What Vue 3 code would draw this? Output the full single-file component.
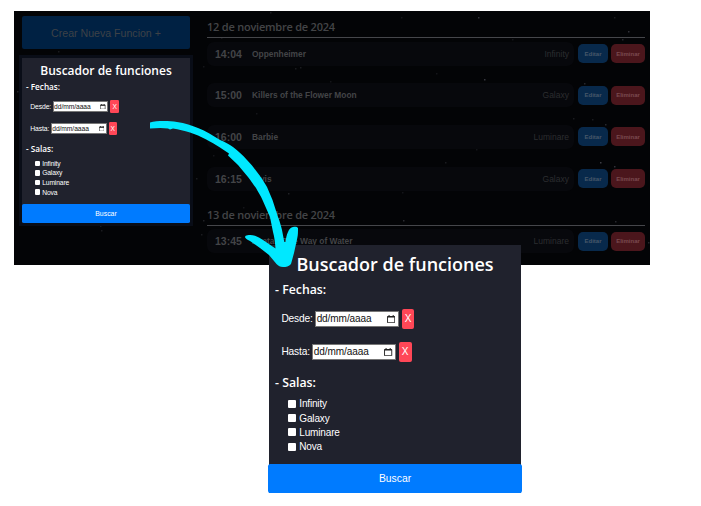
<script setup>
const days = [
  {
    date: '12 de noviembre de 2024',
    shows: [
      { time: '14:04', film: 'Oppenheimer', room: 'Infinity' },
      { time: '15:00', film: 'Killers of the Flower Moon', room: 'Galaxy' },
      { time: '16:00', film: 'Barbie', room: 'Luminare' },
      { time: '16:15', film: 'Elvis', room: 'Galaxy' },
    ],
  },
  {
    date: '13 de noviembre de 2024',
    shows: [{ time: '13:45', film: 'Avatar: The Way of Water', room: 'Luminare' }],
  },
]
const panels = ['small', 'large']
const dates = ['Desde:', 'Hasta:']
const rooms = ['Infinity', 'Galaxy', 'Luminare', 'Nova']
// x, y, opacity of the background stars
const stars = [
  [478, 17, 0.4], [614, 17, 0.2], [628, 31, 0.4], [622, 39, 0.3], [484, 79, 0.45],
  [584, 83, 0.3], [573, 118, 0.2], [592, 119, 0.2], [605, 124, 0.3], [600, 162, 0.5],
  [614, 166, 0.4], [445, 162, 0.2], [476, 149, 0.15], [403, 220, 0.35], [402, 192, 0.15],
  [288, 193, 0.25], [243, 207, 0.15], [270, 12, 0.2], [401, 17, 0.15], [295, 68, 0.2],
  [300, 67, 0.2], [330, 81, 0.15], [203, 66, 0.15], [256, 113, 0.15], [38, 56, 0.15],
  [58, 51, 0.2], [191, 154, 0.5], [100, 225, 0.4], [138, 223, 0.3], [101, 230, 0.2],
  [201, 234, 0.2], [203, 220, 0.25], [196, 178, 0.2], [615, 221, 0.3], [648, 242, 0.3],
  [17, 91, 0.25], [221, 37, 0.3], [512, 39, 0.15], [436, 73, 0.15], [213, 155, 0.15],
]
</script>

<template>
  <main class="stage">
    <section class="app">
      <svg class="stars" viewBox="14 11 636 254">
        <rect v-for="(s, i) in stars" :key="i" :x="s[0]" :y="s[1]" width="1.5" height="1.5" fill="#aab" :opacity="s[2] * 0.7" />
      </svg>
      <aside class="side">
        <button class="create">Crear Nueva Funcion +</button>
      </aside>
      <div class="list">
        <section v-for="day in days" :key="day.date" class="day">
          <h2>{{ day.date }}</h2>
          <div v-for="s in day.shows" :key="s.time" class="show">
            <div class="info">
              <span class="time">{{ s.time }}</span>
              <span class="film">{{ s.film }}</span>
              <span class="room">{{ s.room }}</span>
            </div>
            <button class="edit">Editar</button>
            <button class="del">Eliminar</button>
          </div>
        </section>
      </div>
    </section>

    <form v-for="p in panels" :key="p" class="panel" :class="p" @submit.prevent>
      <h1>Buscador de funciones</h1>
      <h3>- Fechas:</h3>
      <div v-for="d in dates" :key="d" class="field">
        <span class="label">{{ d }}</span>
        <span class="input">
          <span>dd/mm/aaaa</span>
          <svg class="cal" viewBox="0 0 8 8">
            <path d="M.5 1.5h7v6h-7z" fill="none" stroke="#222" stroke-width=".9" />
            <path d="M.5 1h7v1.5h-7zM1.5 0h1v1h-1zM5.5 0h1v1h-1z" fill="#222" />
          </svg>
        </span>
        <button class="clear">X</button>
      </div>
      <h3 class="rooms-title">- Salas:</h3>
      <div class="rooms">
        <label v-for="r in rooms" :key="r"><i class="box"></i>{{ r }}</label>
      </div>
      <button class="search">Buscar</button>
    </form>

    <svg class="arrow" viewBox="0 0 701 506">
      <path
        fill="#00e8ff"
        d="M150 122.5C157 120.500 169 120.700 177 122C185 123 192 125.500 198 128C206 131 213 135.500 220 140C225 142 229 144 233 147C238 151 243 155 247 160C251 164 254 168 257 172C261 177 264 182 267 187L272.500 200L278 217C280 222 281 226 282 230L284.300 242L285.500 242C286 238 286.500 235 288 232C289 229 291 227.500 293 227C295 226.500 297 226.500 298 228C298 232 298 235 297.300 238L294 253L291 264C289 266.500 286 267 283 267C280 267 278.500 266 276.500 264L269 255L260 248L250 241C248 240 246 239 245 237.200C245 236 246 235.300 247.500 235.200C250 235 253 235 255 235.700C258 237 261 238.500 263 240L275.500 248.500C275 243 274.500 237 273 232L270 217L262.500 200C261 196 258 192 256 188C253 184 251 181 248 177L238 165L228 155.500L229 153.500L220 147.500C211 142 201 136 190 132.500C184 130.500 179 129.500 173 128.500L170 129.500L168 128.500C162 127.500 156 128 150 128.500Z"
      />
    </svg>
  </main>
</template>

<style>
body {
  background: #fff;
}
</style>

<style scoped>
* {
  box-sizing: border-box;
}
.stage {
  position: relative;
  width: 701px;
  height: 506px;
  padding: 11px 0 0 14px;
  overflow: hidden;
  background: #fff;
  font-family: 'Liberation Sans', Arial, sans-serif;
}
button {
  border: 0;
  padding: 0;
  margin: 0;
  font-family: inherit;
}
h1,
h2,
h3 {
  margin: 0;
  font-family: 'Open Sans', 'Noto Sans', sans-serif;
  font-weight: 600;
}
.app {
  position: relative;
  display: flex;
  width: 636px;
  height: 254px;
  background: #030406;
}
.stars {
  position: absolute;
  inset: 0;
  width: 100%;
  height: 100%;
}
.side {
  position: relative;
  width: 181px;
  padding: 5px 5px 0 8px;
}
.create {
  width: 168px;
  height: 33px;
  border-radius: 2px;
  background: #002143;
  color: #3e4247;
  font-size: 10.600px;
}
.list {
  position: relative;
  width: 438px;
  margin-left: 12px;
  padding-top: 8px;
}
.day {
  height: 187.500px;
}
.day h2 {
  height: 19px;
  border-bottom: 1px solid #45464a;
  color: #434447;
  font-size: 11px;
  letter-spacing: -0.220px;
  line-height: 16px;
  white-space: nowrap;
}
.show {
  display: flex;
  align-items: center;
  height: 24px;
  margin: 3.500px 0 17.700px;
}
.show + .show {
  margin-top: 0;
}
.info {
  display: flex;
  align-items: center;
  width: 367px;
  height: 24px;
  padding: 0 5px 0 8px;
  border-radius: 7px;
  background: #07080c;
  color: #434447;
}
.time {
  width: 37px;
  font-size: 10.500px;
  font-weight: 700;
}
.film {
  flex: 1;
  font-size: 8.400px;
  font-weight: 700;
}
.room {
  color: #2c2d30;
  font-size: 8.500px;
}
.edit,
.del {
  height: 19px;
  border-radius: 5px;
  font-size: 6px;
  font-weight: 700;
}
.edit {
  width: 30px;
  margin: 0 3px 0 4px;
  background: #08294b;
  color: #47586a;
}
.del {
  width: 34px;
  background: #4b161c;
  color: #7a4a50;
}
.panel {
  position: absolute;
  display: flex;
  flex-direction: column;
  width: calc(168 * var(--u));
  height: calc(165.333 * var(--u));
  background: #20222d;
  color: #fff;
}
.small {
  --u: 1px;
  left: 22px;
  top: 57.500px;
  box-shadow: 0 0 0 3px #090d17;
}
.large {
  --u: 1.5px;
  left: 269px;
  top: 245px;
}
.panel h1 {
  height: calc(25.700 * var(--u));
  font-size: calc(12 * var(--u));
  line-height: calc(26 * var(--u));
  text-align: center;
  white-space: nowrap;
}
.panel h3 {
  height: calc(8 * var(--u));
  padding-left: calc(4 * var(--u));
  font-size: calc(8.200 * var(--u));
  line-height: calc(8 * var(--u));
}
.field {
  display: flex;
  align-items: center;
  height: calc(13.300 * var(--u));
  margin-top: calc(8.800 * var(--u));
  padding-left: calc(8.300 * var(--u));
}
.label {
  margin-right: calc(1.700 * var(--u));
  font-size: calc(6.800 * var(--u));
  letter-spacing: calc(-0.120 * var(--u));
}
.input {
  display: flex;
  align-items: center;
  justify-content: space-between;
  width: calc(55.600 * var(--u));
  height: calc(10.900 * var(--u));
  padding: 0 calc(1.500 * var(--u)) 0 calc(0.300 * var(--u));
  border: 1px solid #777;
  background: #fff;
  color: #111;
  font-size: calc(6.700 * var(--u));
  letter-spacing: calc(-0.060 * var(--u));
}
.cal {
  width: calc(5.500 * var(--u));
  height: calc(5.500 * var(--u));
}
.clear {
  width: calc(8.600 * var(--u));
  height: calc(13.300 * var(--u));
  margin-left: calc(2 * var(--u));
  border-radius: calc(1.300 * var(--u));
  background: #ff4757;
  color: #fff;
  font-size: calc(6.700 * var(--u));
}
.panel .rooms-title {
  margin-top: calc(10 * var(--u));
}
.rooms {
  margin-top: calc(5.100 * var(--u));
  padding-left: calc(12.500 * var(--u));
}
.rooms label {
  display: flex;
  align-items: center;
  height: calc(9.600 * var(--u));
  font-size: calc(6.700 * var(--u));
  letter-spacing: calc(-0.120 * var(--u));
}
.box {
  width: calc(5.300 * var(--u));
  height: calc(5.300 * var(--u));
  margin-right: calc(2.400 * var(--u));
  border-radius: 1px;
  background: #fff;
}
.search {
  height: calc(19.300 * var(--u));
  margin-top: auto;
  border-radius: calc(1.700 * var(--u));
  background: #007bff;
  color: #fff;
  font-size: calc(6.900 * var(--u));
}
.large .search {
  margin-inline: -1px;
}
.arrow {
  position: absolute;
  left: 0;
  top: 0;
  width: 701px;
  height: 506px;
}
</style>
